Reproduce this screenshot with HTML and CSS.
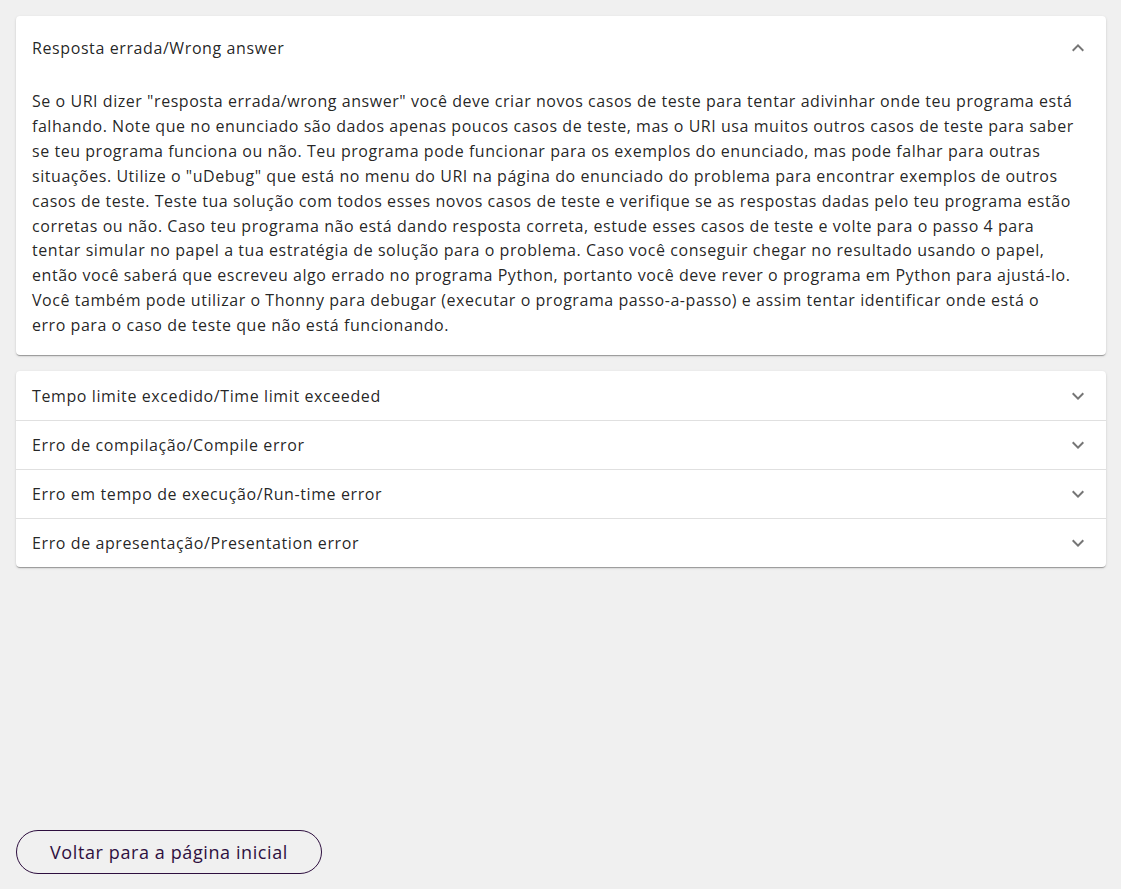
FILE: index.html
```html
<!DOCTYPE html>
<html lang="pt">
<head>
<meta charset="utf-8">
<title>Erros</title>
<link rel="stylesheet" href="styles.css">
</head>
<body>
<main class="page">
  <section class="card">
    <div class="summary">
      <span class="title">Resposta errada/Wrong answer</span>
      <svg class="chev up" viewBox="0 0 24 24"><path d="M16.59 8.59 12 13.17 7.41 8.59 6 10l6 6 6-6z"/></svg>
    </div>
    <p class="details">Se o URI dizer "resposta errada/wrong answer" você deve criar novos casos de teste para tentar adivinhar onde teu programa está<br>falhando. Note que no enunciado são dados apenas poucos casos de teste, mas o URI usa muitos outros casos de teste para saber<br>se teu programa funciona ou não. Teu programa pode funcionar para os exemplos do enunciado, mas pode falhar para outras<br>situações. Utilize o "uDebug" que está no menu do URI na página do enunciado do problema para encontrar exemplos de outros<br>casos de teste. Teste tua solução com todos esses novos casos de teste e verifique se as respostas dadas pelo teu programa estão<br>corretas ou não. Caso teu programa não está dando resposta correta, estude esses casos de teste e volte para o passo 4 para<br>tentar simular no papel a tua estratégia de solução para o problema. Caso você conseguir chegar no resultado usando o papel,<br>então você saberá que escreveu algo errado no programa Python, portanto você deve rever o programa em Python para ajustá-lo.<br>Você também pode utilizar o Thonny para debugar (executar o programa passo-a-passo) e assim tentar identificar onde está o<br>erro para o caso de teste que não está funcionando.</p>
  </section>

  <section class="card list">
    <div class="summary row">
      <span class="title">Tempo limite excedido/Time limit exceeded</span>
      <svg class="chev" viewBox="0 0 24 24"><path d="M16.59 8.59 12 13.17 7.41 8.59 6 10l6 6 6-6z"/></svg>
    </div>
    <div class="summary row">
      <span class="title">Erro de compilação/Compile error</span>
      <svg class="chev" viewBox="0 0 24 24"><path d="M16.59 8.59 12 13.17 7.41 8.59 6 10l6 6 6-6z"/></svg>
    </div>
    <div class="summary row">
      <span class="title">Erro em tempo de execução/Run-time error</span>
      <svg class="chev" viewBox="0 0 24 24"><path d="M16.59 8.59 12 13.17 7.41 8.59 6 10l6 6 6-6z"/></svg>
    </div>
    <div class="summary row">
      <span class="title">Erro de apresentação/Presentation error</span>
      <svg class="chev" viewBox="0 0 24 24"><path d="M16.59 8.59 12 13.17 7.41 8.59 6 10l6 6 6-6z"/></svg>
    </div>
  </section>

  <div class="spacer"></div>
  <button class="back" type="button">Voltar para a página inicial</button>
</main>
</body>
</html>
```

FILE: styles.css
```css
html, body {
  margin: 0;
  padding: 0;
  background: #f0f0f0;
}
body {
  font-family: "Open Sans", "DejaVu Sans", sans-serif;
  color: rgba(0, 0, 0, 0.87);
}
.page {
  display: flex;
  flex-direction: column;
  padding: 16px 15px 15px 16px;
  min-height: 889px;
  box-sizing: border-box;
}
.card {
  background: #fff;
  border-radius: 4px;
  box-shadow: 0 2px 1px -1px rgba(0,0,0,0.2), 0 1px 1px 0 rgba(0,0,0,0.14), 0 1px 3px 0 rgba(0,0,0,0.12);
}
.list {
  margin-top: 16px;
}
.summary {
  display: flex;
  align-items: center;
  justify-content: space-between;
  height: 64px;
  padding: 0 16px;
}
.row {
  height: 48px;
  border-top: 1px solid #e0e0e0;
}
.row:first-child {
  border-top-color: transparent;
}
.title {
  font-size: 16px;
  letter-spacing: 0.6px;
}
.chev {
  width: 24px;
  height: 24px;
  fill: rgba(0, 0, 0, 0.54);
  flex: none;
}
.chev.up {
  transform: rotate(180deg);
}
.details {
  margin: 0;
  padding: 9px 16px 17px;
  font-size: 16px;
  line-height: 24.9px;
  letter-spacing: 0.55px;
  white-space: nowrap;
}
.spacer {
  flex: 1;
}
.back {
  align-self: flex-start;
  width: 306px;
  height: 44px;
  border: 1px solid #2e0f3f;
  border-radius: 22px;
  background: transparent;
  color: #2e0f3f;
  font-family: "Open Sans", "DejaVu Sans", sans-serif;
  font-size: 18px;
  letter-spacing: 0.6px;
  padding: 0;
}
```
